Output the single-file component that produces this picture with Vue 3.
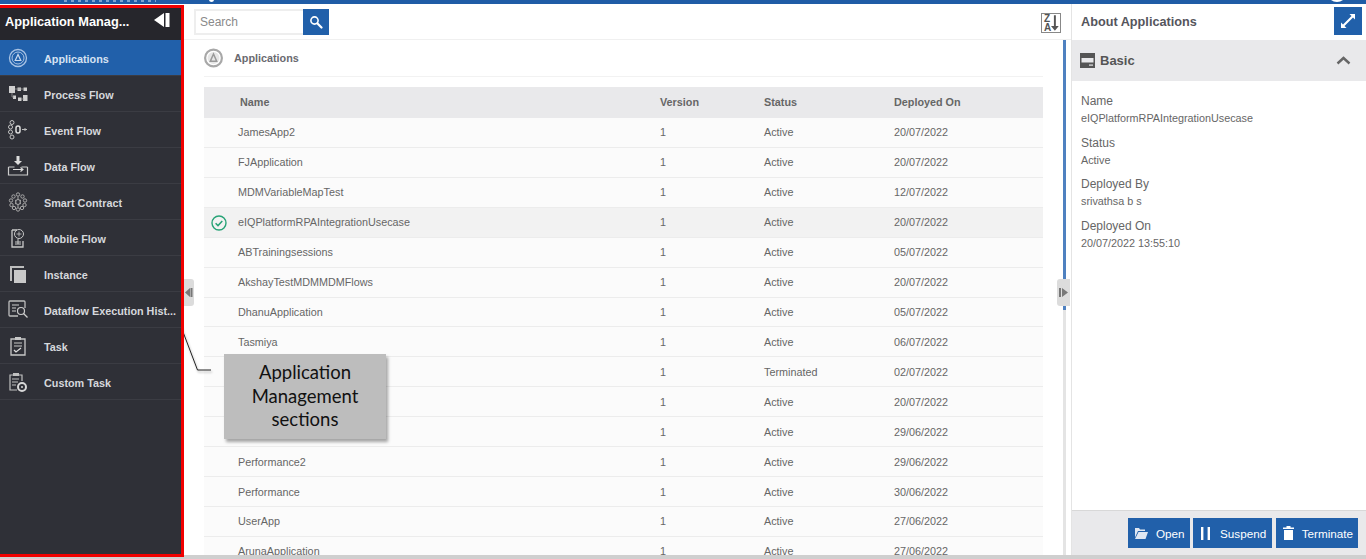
<template>
  <div class="page">
    <div class="topbar">
      <span class="top-letters"></span>
      <span class="top-blob"></span>
      <span class="top-avatar"></span>
    </div>
    <div class="main">
      <aside class="sidebar">
        <div class="side-head">
          <span class="side-title">Application Manag...</span>
          <svg class="collapse-ico" width="16" height="14" viewBox="0 0 16 14">
            <path d="M10 0v14L0 7z" fill="#fff" />
            <rect x="11.500" y="0" width="4" height="14" fill="#fff" />
          </svg>
        </div>
        <div
          v-for="item in menu"
          :key="item.label"
          :class="['side-item', item.active ? 'active' : '']"
        >
          <svg class="side-ico" width="22" height="22" viewBox="0 0 22 22" fill="none" v-html="item.icon"></svg>
          <span class="side-label">{{ item.label }}</span>
        </div>
      </aside>

      <section class="center">
        <div class="toolbar">
          <div class="search">
            <input class="search-input" placeholder="Search" />
            <button class="search-btn">
              <svg width="14" height="14" viewBox="0 0 14 14" fill="none">
                <circle cx="5.500" cy="5.500" r="3.600" stroke="#fff" stroke-width="1.600" />
                <path d="M8.500 8.500l4 4" stroke="#fff" stroke-width="2.200" stroke-linecap="round" />
              </svg>
            </button>
          </div>
          <div class="sort-btn">
            <span>Z<br />A</span>
            <svg width="8" height="16" viewBox="0 0 8 16">
              <path d="M3 0h2v11h3l-4 5-4-5h3z" fill="#555" />
            </svg>
          </div>
        </div>
        <div class="content">
          <div class="section-title">
            <svg width="19" height="20" viewBox="0 0 19 20" fill="none">
              <circle cx="9.500" cy="10" r="8.400" stroke="#a8a8a8" stroke-width="2.200" />
              <circle cx="9.500" cy="10" r="6" fill="#e6e6e6" />
              <path d="M9.500 6L6.300 13.300h6.400z" stroke="#999" stroke-width="1.500" fill="none" />
            </svg>
            <span>Applications</span>
          </div>
          <div class="table">
            <div class="t-row t-head">
              <div class="c-name head-name">Name</div>
              <div class="c-ver">Version</div>
              <div class="c-status">Status</div>
              <div class="c-date">Deployed On</div>
            </div>
            <div
              v-for="(row, i) in rows"
              :key="i"
              :class="['t-row', row.selected ? 'selected' : '']"
            >
              <div class="c-name">
                <svg v-if="row.selected" class="check" width="16" height="16" viewBox="0 0 16 16" fill="none">
                  <circle cx="8" cy="8" r="7" stroke="#27a376" stroke-width="1.400" />
                  <path d="M4.600 8.200l2.400 2.400 4.300-4.600" stroke="#27a376" stroke-width="1.500" />
                </svg>
                {{ row.name }}
              </div>
              <div class="c-ver">1</div>
              <div class="c-status">{{ row.status }}</div>
              <div class="c-date">{{ row.date }}</div>
            </div>
          </div>
        </div>
        <div class="handle handle-left">
          <svg width="8" height="9" viewBox="0 0 8 9">
            <path d="M5 0v9L0 4.500z" fill="#777" /><rect x="5.500" y="0" width="2" height="9" fill="#777" />
          </svg>
        </div>
        <div class="splitter"></div>
        <div class="handle handle-right">
          <svg width="9" height="9" viewBox="0 0 9 9">
            <rect x="0" y="0" width="2" height="9" fill="#777" /><path d="M3 0v9l6-4.500z" fill="#777" />
          </svg>
        </div>
      </section>

      <aside class="about">
        <div class="about-head">
          <span class="about-title">About Applications</span>
          <button class="expand-btn">
            <svg width="14" height="14" viewBox="0 0 14 14">
              <path d="M8.500 0H14v5.500l-2-2-8.500 8.500 2 2H0V8.500l2 2L10.500 2z" fill="#fff" />
            </svg>
          </button>
        </div>
        <div class="basic-bar">
          <svg width="15" height="15" viewBox="0 0 15 15">
            <path d="M0 0h15v15H0z" fill="#555" />
            <path d="M1.500 5h12v4.500h-12z" fill="#e9e9eb" />
            <path d="M9 11.500h4v1.200H9z" fill="#e9e9eb" />
          </svg>
          <span class="basic-label">Basic</span>
          <svg class="chev" width="15" height="9" viewBox="0 0 15 9" fill="none">
            <path d="M1.500 7.500l6-5.500 6 5.500" stroke="#666" stroke-width="2.400" />
          </svg>
        </div>
        <div class="fields">
          <div v-for="f in fields" :key="f.label" class="field">
            <div class="field-label">{{ f.label }}</div>
            <div class="field-value">{{ f.value }}</div>
          </div>
        </div>
        <div class="about-foot">
          <button class="act-btn">
            <svg width="13" height="11" viewBox="0 0 13 11">
              <path d="M0 0h4l1 1.500h5V3H3L0 9.500zM3.500 4H13l-2.500 7H0z" fill="#dfe7f2" />
            </svg>
            Open
          </button>
          <button class="act-btn act-suspend">
            <svg width="9" height="13" viewBox="0 0 9 13">
              <path d="M0 0h2.400v13H0zM6.600 0H9v13H6.600z" fill="#fff" />
            </svg>
            Suspend
          </button>
          <button class="act-btn">
            <svg width="11" height="14" viewBox="0 0 11 14">
              <path d="M0 1.500h3.500V0h4v1.500H11V3H0zM1 4h9v10H1z" fill="#fff" />
            </svg>
            Terminate
          </button>
        </div>
      </aside>
    </div>
    <div class="bottombar"></div>

    <svg class="leader" width="36" height="52" viewBox="0 0 36 52" fill="none">
      <path d="M1 1l17.500 46H32" stroke="#222" stroke-width="1" />
    </svg>
    <div class="callout">Application Management sections</div>
  </div>
</template>

<script setup>
const menu = [
  {
    label: 'Applications',
    active: true,
    icon: '<circle cx="11" cy="11" r="8.500" stroke="#a9c3e4" stroke-width="1.300"/><circle cx="11" cy="11" r="6" stroke="#a9c3e4" stroke-width="1"/><path d="M11 7.500l-2.800 6h5.600z" stroke="#c9d9ee" stroke-width="1.200"/>'
  },
  {
    label: 'Process Flow',
    icon: '<path d="M2 3h6v7H2zM10.500 4.500h3.500v3.500h-3.500zM16.500 4.500h3.500v3.500h-3.500zM6 12.500h3v3.500H6zM11 14.500h3.500v3.500H11zM16 12h4.500v6H16z" fill="#cfcfcf"/><path d="M8 6h9M14 16h3M5 10v4h2" stroke="#9a9a9a" stroke-width=".8"/>'
  },
  {
    label: 'Event Flow',
    icon: '<circle cx="5" cy="3.500" r="2" stroke="#c4c4c4"/><circle cx="3.500" cy="8" r="2" stroke="#c4c4c4"/><circle cx="3.500" cy="13" r="2" stroke="#c4c4c4"/><circle cx="5" cy="18" r="2" stroke="#c4c4c4"/><rect x="9" y="7" width="4" height="7" rx="2" stroke="#ddd" stroke-width="1.500"/><path d="M15 10.500h5M18 9v3" stroke="#bbb"/>'
  },
  {
    label: 'Data Flow',
    icon: '<path d="M9.500 1h3v5H15l-4 4-4-4h2.500z" fill="#ddd"/><path d="M1.500 12h6M14.500 12h6M1.500 12v8h19v-8" stroke="#ccc" stroke-width="1.200"/><path d="M6 14.500h10M13.500 12.500l2.500 2-2.500 2" stroke="#ddd" stroke-width="1.100"/>'
  },
  {
    label: 'Smart Contract',
    icon: '<g stroke="#a8a8a8" stroke-width="1"><circle cx="11" cy="3.500" r="1.700"/><circle cx="11" cy="18.500" r="1.700"/><circle cx="6.500" cy="5.500" r="1.700"/><circle cx="15.500" cy="5.500" r="1.700"/><circle cx="4" cy="9.500" r="1.700"/><circle cx="18" cy="9.500" r="1.700"/><circle cx="4.500" cy="14" r="1.700"/><circle cx="17.500" cy="14" r="1.700"/><circle cx="7" cy="17" r="1.700"/><circle cx="15" cy="17" r="1.700"/><circle cx="11" cy="11" r="2.500"/><path d="M8 9l1.500 1M14 9l-1.500 1M8 13l1.500-1M14 13l-1.500-1M11 5.500v3M11 13.500v3"/></g>'
  },
  {
    label: 'Mobile Flow',
    icon: '<path d="M5 3h5M5 3v17h11v-6" stroke="#c8c8c8" stroke-width="1.300"/><circle cx="12" cy="7" r="4.500" stroke="#c8c8c8"/><path d="M12 4.500v5M9.500 7h5" stroke="#c8c8c8" stroke-width=".8"/><path d="M8 17h6M11 12v5M8 15h6" stroke="#c8c8c8"/>'
  },
  {
    label: 'Instance',
    icon: '<path d="M3 18V3h14v2H5v13z" fill="#bdbdbd"/><path d="M7 7h12v13H7z" fill="#c9c9c9"/>'
  },
  {
    label: 'Dataflow Execution Hist...',
    icon: '<path d="M18 9V3a1 1 0 0 0-1-1H3a1 1 0 0 0-1 1v13a1 1 0 0 0 1 1h8" stroke="#bdbdbd" stroke-width="1.300"/><path d="M5 6h7M5 9h4M5 12h4" stroke="#d0d0d0" stroke-width="1.200"/><circle cx="14" cy="12" r="3.500" stroke="#ccc" stroke-width="1.200"/><path d="M16.500 14.500l4 4" stroke="#ccc" stroke-width="1.300"/>'
  },
  {
    label: 'Task',
    icon: '<path d="M4 4h14v16H4z" stroke="#c8c8c8" stroke-width="1.300"/><path d="M8 2h6v3H8z" fill="#c8c8c8"/><path d="M7 8h8M7 11h8" stroke="#c8c8c8"/><path d="M7 15l2 2 5-4" stroke="#ddd" stroke-width="1.300"/>'
  },
  {
    label: 'Custom Task',
    icon: '<path d="M10 19H3V4h12v6" stroke="#c0c0c0" stroke-width="1.200"/><path d="M6 2h6v3H6z" fill="#c0c0c0"/><path d="M5 8h7M5 11h6M5 14h4" stroke="#c0c0c0"/><circle cx="15" cy="16" r="4" stroke="#d8d8d8" stroke-width="2"/><circle cx="15" cy="16" r="1" fill="#d8d8d8"/>'
  }
]

const rows = [
  { name: 'JamesApp2', status: 'Active', date: '20/07/2022' },
  { name: 'FJApplication', status: 'Active', date: '20/07/2022' },
  { name: 'MDMVariableMapTest', status: 'Active', date: '12/07/2022' },
  { name: 'eIQPlatformRPAIntegrationUsecase', status: 'Active', date: '20/07/2022', selected: true },
  { name: 'ABTrainingsessions', status: 'Active', date: '05/07/2022' },
  { name: 'AkshayTestMDMMDMFlows', status: 'Active', date: '20/07/2022' },
  { name: 'DhanuApplication', status: 'Active', date: '05/07/2022' },
  { name: 'Tasmiya', status: 'Active', date: '06/07/2022' },
  { name: '', status: 'Terminated', date: '02/07/2022' },
  { name: '', status: 'Active', date: '20/07/2022' },
  { name: '', status: 'Active', date: '29/06/2022' },
  { name: 'Performance2', status: 'Active', date: '29/06/2022' },
  { name: 'Performance', status: 'Active', date: '30/06/2022' },
  { name: 'UserApp', status: 'Active', date: '27/06/2022' },
  { name: 'ArunaApplication', status: 'Active', date: '27/06/2022' }
]

const fields = [
  { label: 'Name', value: 'eIQPlatformRPAIntegrationUsecase' },
  { label: 'Status', value: 'Active' },
  { label: 'Deployed By', value: 'srivathsa b s' },
  { label: 'Deployed On', value: '20/07/2022 13:55:10' }
]
</script>

<style>
html, body { margin: 0; height: 100%; overflow: hidden; background: #fff; }
</style>

<style scoped>
.page {
  position: relative;
  width: 1366px;
  height: 559px;
  display: flex;
  flex-direction: column;
  overflow: hidden;
  font-family: "Liberation Sans", Arial, sans-serif;
  background: #fff;
}

.topbar {
  position: relative;
  flex: 0 0 4px;
  background: #1f5ca6;
  overflow: hidden;
}

/* bottoms of the cropped header text and logos */
.top-letters {
  position: absolute;
  left: 64px;
  top: 0;
  width: 92px;
  height: 2px;
  background: repeating-linear-gradient(to right, #7ea3d0 0, #7ea3d0 3px, transparent 3px, transparent 7px);
}

.top-blob {
  position: absolute;
  left: 209px;
  top: -3px;
  width: 5px;
  height: 5px;
  border-radius: 50%;
  background: #fff;
}

.top-avatar {
  position: absolute;
  left: 1327px;
  top: -18px;
  width: 20px;
  height: 20px;
  border-radius: 50%;
  background: #fff;
}

.bottombar {
  flex: 0 0 4px;
  background: #cfcfcf;
}

.main {
  flex: 1;
  display: flex;
  min-height: 0;
}

.sidebar {
  position: relative;
  z-index: 1;
  flex: 0 0 184px;
  box-sizing: border-box;
  margin: 1px 0 -2px;
  border-top: 3px solid #f00000;
  border-right: 3px solid #f00000;
  border-bottom: 3px solid #f00000;
  background: #2f3037;
  display: flex;
  flex-direction: column;
}

.side-head {
  flex: 0 0 32px;
  box-sizing: border-box;
  background: #26262c;
  display: flex;
  align-items: center;
  justify-content: space-between;
  padding: 0 11px 6px 5px;
}

.side-title {
  color: #fff;
  font-size: 12.800px;
  font-weight: bold;
}

.collapse-ico {
  margin-bottom: 3px;
}

.side-item {
  flex: 0 0 36px;
  box-sizing: border-box;
  display: flex;
  align-items: center;
  border-bottom: 1px solid #3b3c43;
  padding-left: 7px;
  color: #d6d8dc;
  font-size: 10.800px;
  font-weight: bold;
}

.side-item.active {
  background: #2160aa;
  color: #d6e2f2;
}

.side-ico {
  flex: 0 0 22px;
}

.side-label {
  margin: 2px 0 0 15px;
  white-space: nowrap;
}

.center {
  position: relative;
  flex: 0 0 887px;
  display: flex;
  flex-direction: column;
  min-width: 0;
}

.toolbar {
  flex: 0 0 36px;
  box-sizing: border-box;
  display: flex;
  align-items: center;
  justify-content: space-between;
  padding: 1px 10px 0 10px;
  border-bottom: 1px solid #f0f0f0;
}

.search {
  display: flex;
}

.search-input {
  box-sizing: border-box;
  width: 109px;
  height: 26px;
  border: 2px solid #eeeeee;
  border-right: 0;
  padding: 0 4px;
  font-family: inherit;
  font-size: 12px;
  outline: none;
}

.search-input::placeholder {
  color: #8a8a8a;
}

.search-btn {
  width: 26px;
  height: 26px;
  border: 0;
  padding: 0;
  background: #2160aa;
  display: flex;
  align-items: center;
  justify-content: center;
}

.sort-btn {
  box-sizing: border-box;
  width: 20px;
  height: 20px;
  margin-top: 2px;
  border: 1px solid #888;
  display: flex;
  align-items: center;
  justify-content: space-between;
  padding: 0 1px 0 2px;
  color: #555;
  font-size: 10px;
  font-weight: bold;
  line-height: 9px;
}

.content {
  flex: 1;
  min-height: 0;
  overflow: hidden;
  padding: 0 28px 0 20px;
}

.section-title {
  display: flex;
  align-items: center;
  height: 36px;
  gap: 11px;
  margin-bottom: 10px;
  border-bottom: 1px solid #f2f2f2;
  color: #6a6a70;
  font-size: 10.800px;
  font-weight: bold;
}

.table {
  font-size: 10.800px;
  color: #666;
}

.t-row {
  display: flex;
  align-items: center;
  height: 29.930px;
  box-sizing: border-box;
  border-bottom: 1px solid #ececec;
  background: #fbfbfb;
  white-space: nowrap;
}

.t-head {
  height: 31px;
  padding-bottom: 2px;
  background: #e9e9eb;
  border-bottom: 0;
  font-weight: bold;
  color: #666;
}

.t-row.selected {
  background: #f2f2f2;
}

.c-name {
  position: relative;
  flex: 0 0 456px;
  box-sizing: border-box;
  padding-left: 34px;
}

.head-name {
  padding-left: 36px;
}

.check {
  position: absolute;
  left: 7px;
  top: -1px;
}

.c-ver {
  flex: 0 0 104px;
}

.c-status {
  flex: 0 0 130px;
}

.c-date {
  flex: 1;
}

.handle {
  position: absolute;
  top: 275px;
  width: 13px;
  height: 27px;
  background: #dcdcdc;
  display: flex;
  align-items: center;
  justify-content: center;
}

.handle-left {
  left: 0;
  width: 10px;
  border-radius: 0 3px 3px 0;
}

.handle-right {
  right: 1px;
  border-radius: 3px 0 0 3px;
}

.splitter {
  position: absolute;
  top: 36px;
  bottom: 0;
  right: 5px;
  width: 3px;
  background: linear-gradient(to bottom, #4f81c0 0, #4f81c0 270px, #e4e4e4 270px);
}

.about {
  flex: 1;
  display: flex;
  flex-direction: column;
  border-left: 1px solid #e4e4e4;
  min-width: 0;
}

.about-head {
  flex: 0 0 36px;
  box-sizing: border-box;
  display: flex;
  align-items: center;
  justify-content: space-between;
  padding: 0 4px 2px 9px;
  color: #55555c;
  font-size: 12.700px;
  font-weight: bold;
}

.about-title {
  margin-top: 2px;
}

.expand-btn {
  width: 28px;
  height: 28px;
  border: 0;
  padding: 0;
  background: #2160aa;
  display: flex;
  align-items: center;
  justify-content: center;
}

.basic-bar {
  flex: 0 0 41px;
  display: flex;
  align-items: center;
  padding: 0 15px 0 8px;
  background: #e9e9eb;
}

.basic-label {
  flex: 1;
  margin-left: 5px;
  color: #555;
  font-size: 13px;
  font-weight: bold;
}

.fields {
  flex: 1;
  padding: 13px 9px 0;
}

.field {
  margin-bottom: 11.700px;
}

.field-label {
  color: #666;
  font-size: 12px;
  line-height: 14px;
}

.field-value {
  margin-top: 4px;
  color: #666;
  font-size: 10.800px;
  line-height: 12px;
}

.about-foot {
  flex: 0 0 45px;
  box-sizing: border-box;
  display: flex;
  align-items: center;
  justify-content: flex-end;
  gap: 3.500px;
  padding: 0 8px 0 0;
  background: #e9e9eb;
  border-top: 1px solid #d8d8d8;
}

.act-btn {
  display: flex;
  align-items: center;
  gap: 8px;
  height: 30px;
  border: 0;
  padding: 0 5px 0 7px;
  background: #2160aa;
  color: #fff;
  font-family: inherit;
  font-size: 11.700px;
}

.act-suspend {
  gap: 10px;
  padding: 0 6px 0 8px;
}

.leader {
  position: absolute;
  left: 179px;
  top: 323px;
  filter: drop-shadow(1px 2px 1px rgba(0, 0, 0, 0.3));
}

.callout {
  position: absolute;
  left: 224px;
  top: 354px;
  box-sizing: border-box;
  width: 162px;
  height: 85px;
  padding: 7px 14px 0;
  background: #bdbdbd;
  box-shadow: 2px 3px 3px rgba(0, 0, 0, 0.35);
  color: #111;
  font-family: Lato, "Liberation Sans", sans-serif;
  font-size: 18.500px;
  line-height: 23.500px;
  text-align: center;
}
</style>
